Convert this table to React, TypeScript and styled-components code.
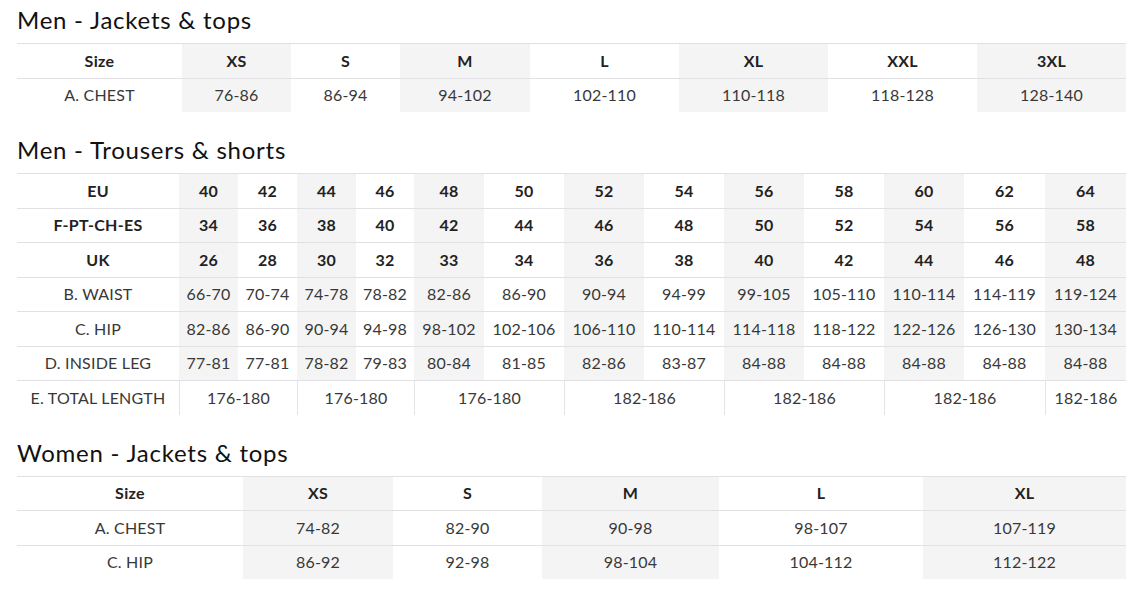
import React from "react";
import styled, { createGlobalStyle } from "styled-components";

const Global = createGlobalStyle`
  html, body { margin: 0; padding: 0; background: #ffffff; }
  body { font-family: Lato, "Open Sans", Arial, sans-serif; color: #333; }
`;

const Page = styled.div`
  padding: 5px 16px 0 17px;
  display: flex;
  flex-direction: column;
  gap: 23px;
`;

const Section = styled.section`
  display: flex;
  flex-direction: column;
`;

const Title = styled.h2`
  margin: 0 0 9px 0;
  font-family: Lato, Arial, sans-serif;
  font-weight: 400;
  font-size: 24px;
  line-height: 29px;
  letter-spacing: 0.75px;
  color: #111;
`;

const Table = styled.table`
  width: 1109px;
  table-layout: fixed;
  border-collapse: separate;
  border-spacing: 0;
  font-family: Lato, Arial, sans-serif;
  font-size: 16px;
`;

const Col = styled.col<{ $w: number }>`
  width: ${(p) => p.$w}px;
`;

const Row = styled.tr`
  height: 34.5px;
`;

const Cell = styled.td<{ $shade?: boolean; $bold?: boolean; $divider?: boolean }>`
  padding: 0;
  text-align: center;
  vertical-align: middle;
  line-height: 20px;
  border-top: 1px solid #e1e1e5;
  border-left: ${(p) => (p.$divider ? "1px solid #e4e4e8" : "0")};
  background: ${(p) => (p.$shade ? "#f4f4f4" : "#ffffff")};
  font-weight: ${(p) => (p.$bold ? 700 : 400)};
  letter-spacing: ${(p) => (p.$bold ? "0.3px" : "0.2px")};
  color: ${(p) => (p.$bold ? "#222" : "#383838")};
  white-space: nowrap;
`;

type SimpleRow = { label: string; values: string[]; bold?: boolean };

const SimpleTable: React.FC<{ widths: number[]; rows: SimpleRow[] }> = ({ widths, rows }) => (
  <Table>
    <colgroup>
      {widths.map((w, i) => (
        <Col key={i} $w={w} />
      ))}
    </colgroup>
    <tbody>
      {rows.map((r) => (
        <Row key={r.label}>
          <Cell $bold={r.bold}>{r.label}</Cell>
          {r.values.map((v, i) => (
            <Cell key={i} $bold={r.bold} $shade={i % 2 === 0}>
              {v}
            </Cell>
          ))}
        </Row>
      ))}
    </tbody>
  </Table>
);

const menJackets: SimpleRow[] = [
  { label: "Size", values: ["XS", "S", "M", "L", "XL", "XXL", "3XL"], bold: true },
  { label: "A. CHEST", values: ["76-86", "86-94", "94-102", "102-110", "110-118", "118-128", "128-140"] },
];

const trousers: SimpleRow[] = [
  { label: "EU", values: ["40", "42", "44", "46", "48", "50", "52", "54", "56", "58", "60", "62", "64"], bold: true },
  { label: "F-PT-CH-ES", values: ["34", "36", "38", "40", "42", "44", "46", "48", "50", "52", "54", "56", "58"], bold: true },
  { label: "UK", values: ["26", "28", "30", "32", "33", "34", "36", "38", "40", "42", "44", "46", "48"], bold: true },
  { label: "B. WAIST", values: ["66-70", "70-74", "74-78", "78-82", "82-86", "86-90", "90-94", "94-99", "99-105", "105-110", "110-114", "114-119", "119-124"] },
  { label: "C. HIP", values: ["82-86", "86-90", "90-94", "94-98", "98-102", "102-106", "106-110", "110-114", "114-118", "118-122", "122-126", "126-130", "130-134"] },
  { label: "D. INSIDE LEG", values: ["77-81", "77-81", "78-82", "79-83", "80-84", "81-85", "82-86", "83-87", "84-88", "84-88", "84-88", "84-88", "84-88"] },
];

const totalLength = [
  { span: 2, value: "176-180" },
  { span: 2, value: "176-180" },
  { span: 2, value: "176-180" },
  { span: 2, value: "182-186" },
  { span: 2, value: "182-186" },
  { span: 2, value: "182-186" },
  { span: 1, value: "182-186" },
];

const womenJackets: SimpleRow[] = [
  { label: "Size", values: ["XS", "S", "M", "L", "XL"], bold: true },
  { label: "A. CHEST", values: ["74-82", "82-90", "90-98", "98-107", "107-119"] },
  { label: "C. HIP", values: ["86-92", "92-98", "98-104", "104-112", "112-122"] },
];

const trouserWidths = [162, 59, 59, 59, 58, 70, 80, 80, 80, 80, 80, 80, 81, 81];

export default function App() {
  return (
    <>
      <Global />
      <Page>
        <Section>
          <Title>Men - Jackets &amp; tops</Title>
          <SimpleTable widths={[165, 109, 109, 130, 149, 149, 149, 149]} rows={menJackets} />
        </Section>
        <Section>
          <Title>Men - Trousers &amp; shorts</Title>
          <Table>
            <colgroup>
              {trouserWidths.map((w, i) => (
                <Col key={i} $w={w} />
              ))}
            </colgroup>
            <tbody>
              {trousers.map((r) => (
                <Row key={r.label}>
                  <Cell $bold={r.bold}>{r.label}</Cell>
                  {r.values.map((v, i) => (
                    <Cell key={i} $bold={r.bold} $shade={i % 2 === 0}>
                      {v}
                    </Cell>
                  ))}
                </Row>
              ))}
              <Row>
                <Cell>E. TOTAL LENGTH</Cell>
                {totalLength.map((c, i) => (
                  <Cell key={i} colSpan={c.span} $divider>
                    {c.value}
                  </Cell>
                ))}
              </Row>
            </tbody>
          </Table>
        </Section>
        <Section>
          <Title>Women - Jackets &amp; tops</Title>
          <SimpleTable widths={[226, 150, 149, 177, 204, 203]} rows={womenJackets} />
        </Section>
      </Page>
    </>
  );
}
